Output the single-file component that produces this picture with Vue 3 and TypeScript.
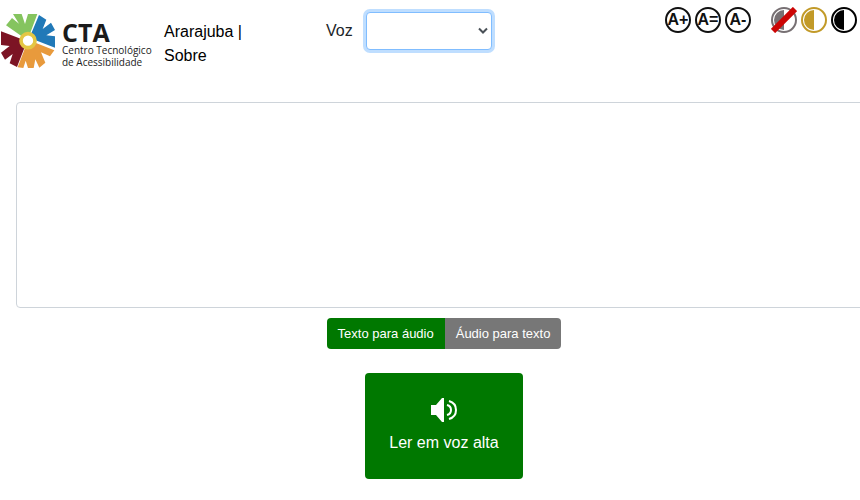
<script setup lang="ts">
import { onMounted, ref } from 'vue'

type Mode = 'speak' | 'listen'
type Contrast = 'none' | 'gold' | 'dark'

const voice = ref('')
const text = ref('')
const mode = ref<Mode>('speak')
const contrast = ref<Contrast>('none')
const fontStep = ref(0)
const voiceSelect = ref<HTMLSelectElement | null>(null)

const sizeTools = [
  { label: 'A+', title: 'Aumentar fonte', change: 1 },
  { label: 'A=', title: 'Fonte normal', change: 0 },
  { label: 'A-', title: 'Diminuir fonte', change: -1 },
]

const contrastTools: { name: Contrast; title: string; color: string }[] = [
  { name: 'none', title: 'Sem contraste', color: '#777073' },
  { name: 'gold', title: 'Contraste dourado', color: '#c29a28' },
  { name: 'dark', title: 'Alto contraste', color: '#000000' },
]

function resize(change: number) {
  fontStep.value = change === 0 ? 0 : fontStep.value + change
}

function speak() {
  window.speechSynthesis?.speak(new SpeechSynthesisUtterance(text.value))
}

onMounted(() => voiceSelect.value?.focus())
</script>

<template>
  <div class="page">
    <header class="header">
      <a class="brand" href="#cta">
        <svg class="flower" viewBox="0 0 168 168" aria-hidden="true">
          <g transform="translate(0 -9)">
            <path fill="#85c45f" d="M18 46 36 24 57 41 39 12 65 12 75 42 84 12 112 12 91 68 64 78Z" />
            <path fill="#2179b8" d="M117 15 139 29 128 57 153 38 165 60 139 76 165 79 165 113 105 90 94 70Z" />
            <path fill="#e89a3c" d="M106 98 163 121 150 139 123 127 136 158 118 173 106 148 101 174 84 174 77 152 70 174 53 172 76 112Z" />
            <path fill="#7c1424" d="M3 64 64 87 74 112 51 171 29 160 38 132 15 149 3 128 29 108 3 105Z" />
            <circle cx="84" cy="92" r="21" fill="#fff" stroke="#e4c643" stroke-width="11" />
          </g>
        </svg>
        <span class="brand-text">
          <strong>CTA</strong>
          <span>Centro Tecnológico</span>
          <span>de Acessibilidade</span>
        </span>
      </a>
      <nav class="links">
        <a href="#ararajuba">Ararajuba</a> | <a href="#sobre">Sobre</a>
      </nav>
      <div class="voice">
        <label for="voice">Voz</label>
        <span class="select-box">
          <select id="voice" ref="voiceSelect" v-model="voice"></select>
          <svg viewBox="0 0 10 8" aria-hidden="true"><path d="M1 1.5 5 5.5 9 1.5" fill="none" stroke="#495057" stroke-width="2" /></svg>
        </span>
      </div>
      <div class="tools">
        <div class="tool-group">
          <button v-for="tool in sizeTools" :key="tool.label" class="tool size-tool" type="button" :title="tool.title" @click="resize(tool.change)">
            {{ tool.label }}
          </button>
        </div>
        <div class="tool-group">
          <button v-for="tool in contrastTools" :key="tool.name" class="tool" type="button" :title="tool.title" :aria-label="tool.title" @click="contrast = tool.name">
            <svg viewBox="0 0 26 26" aria-hidden="true">
              <circle cx="13" cy="13" r="12" fill="#fff" :stroke="tool.color" stroke-width="2" />
              <path d="M13 3A10 10 0 0 0 13 23Z" :fill="tool.color" />
              <path v-if="tool.name === 'none'" d="M2 24 24 2" stroke="#cc0505" stroke-width="6" />
            </svg>
          </button>
        </div>
      </div>
    </header>

    <main class="content">
      <textarea v-model="text" class="editor" aria-label="Texto"></textarea>
      <div class="modes" role="group">
        <button type="button" :class="{ active: mode === 'speak' }" @click="mode = 'speak'">Texto para áudio</button>
        <button type="button" :class="{ active: mode === 'listen' }" @click="mode = 'listen'">Áudio para texto</button>
      </div>
      <button class="read" type="button" @click="speak">
        <svg viewBox="0 0 26 24" aria-hidden="true">
          <path fill="#fff" d="M0 7H5L11 0H13V24H11L5 17H0Z" />
          <path fill="none" stroke="#fff" stroke-width="2" d="M16 7Q20 8 20 12T16 17M18 3Q25 5 25 12T18 21" />
        </svg>
        <span>Ler em voz alta</span>
      </button>
    </main>
  </div>
</template>

<style>
body {
  background: #fff;
  overflow: hidden;
}
</style>

<style scoped>
.page {
  color: #212529;
  font: 16px/24px "Liberation Sans", Arial, sans-serif;
}

.page * {
  box-sizing: border-box;
}

button,
select,
textarea {
  margin: 0;
  font: inherit;
}

a {
  color: #000;
  text-decoration: none;
}

.header {
  display: grid;
  grid-template-columns: 164px 162px 1fr auto;
  align-items: start;
  min-height: 80px;
}

.brand {
  display: flex;
  gap: 6px;
  padding-top: 13px;
  color: #1b1b1b;
}

.flower {
  width: 56px;
  height: 56px;
}

.brand-text {
  display: flex;
  flex-direction: column;
  padding-top: 7px;
  font: 10px/12px "Open Sans", "Noto Sans", sans-serif;
  white-space: nowrap;
}

.brand-text strong {
  font-size: 25px;
  line-height: 24px;
}

.links {
  width: 90px;
  padding-top: 20px;
  color: #000;
}

.voice {
  display: flex;
  align-items: center;
  gap: 13px;
  padding-top: 12px;
}

.select-box {
  display: grid;
  align-items: center;
  width: 126px;
}

.select-box > * {
  grid-area: 1 / 1;
}

.select-box select {
  width: 100%;
  height: 38px;
  appearance: none;
  border: 1px solid #80bdff;
  border-radius: 4px;
  outline: none;
  background: #fff;
  box-shadow: 0 0 0 3px #bfdeff;
}

.select-box svg {
  justify-self: end;
  width: 10px;
  height: 8px;
  margin-right: 4px;
  pointer-events: none;
}

.tools {
  display: flex;
  gap: 20px;
  padding: 7px 3px 0 0;
}

.tool-group {
  display: flex;
  gap: 4px;
}

.tool {
  display: flex;
  align-items: center;
  justify-content: center;
  width: 26px;
  height: 26px;
  padding: 0;
  border: 0;
  border-radius: 50%;
  background: #fff;
}

.tool svg {
  width: 26px;
  height: 26px;
}

.size-tool {
  border: 2px solid #111;
  color: #111;
  font-size: 16px;
  font-weight: bold;
  line-height: 22px;
}

.content {
  display: flex;
  flex-direction: column;
  align-items: center;
  width: calc(100% + 28px);
  padding: 22px 16px;
}

.editor {
  display: block;
  width: 100%;
  height: 206px;
  padding: 6px 12px;
  border: 1px solid #ced4da;
  border-radius: 4px;
  background: #fff;
  resize: none;
}

.modes {
  display: flex;
  margin: 10px 0 24px;
  overflow: hidden;
  border-radius: 4px;
}

.modes button {
  height: 31px;
  padding: 0 11px;
  border: 0;
  background: #777;
  color: #fff;
  font-size: 13px;
}

.modes button.active {
  background: #007800;
}

.read {
  display: flex;
  flex-direction: column;
  align-items: center;
  gap: 9px;
  padding: 25px 24px 24px;
  border: 0;
  border-radius: 4px;
  background: #007800;
  color: #fff;
}

.read svg {
  width: 26px;
  height: 24px;
}
</style>
